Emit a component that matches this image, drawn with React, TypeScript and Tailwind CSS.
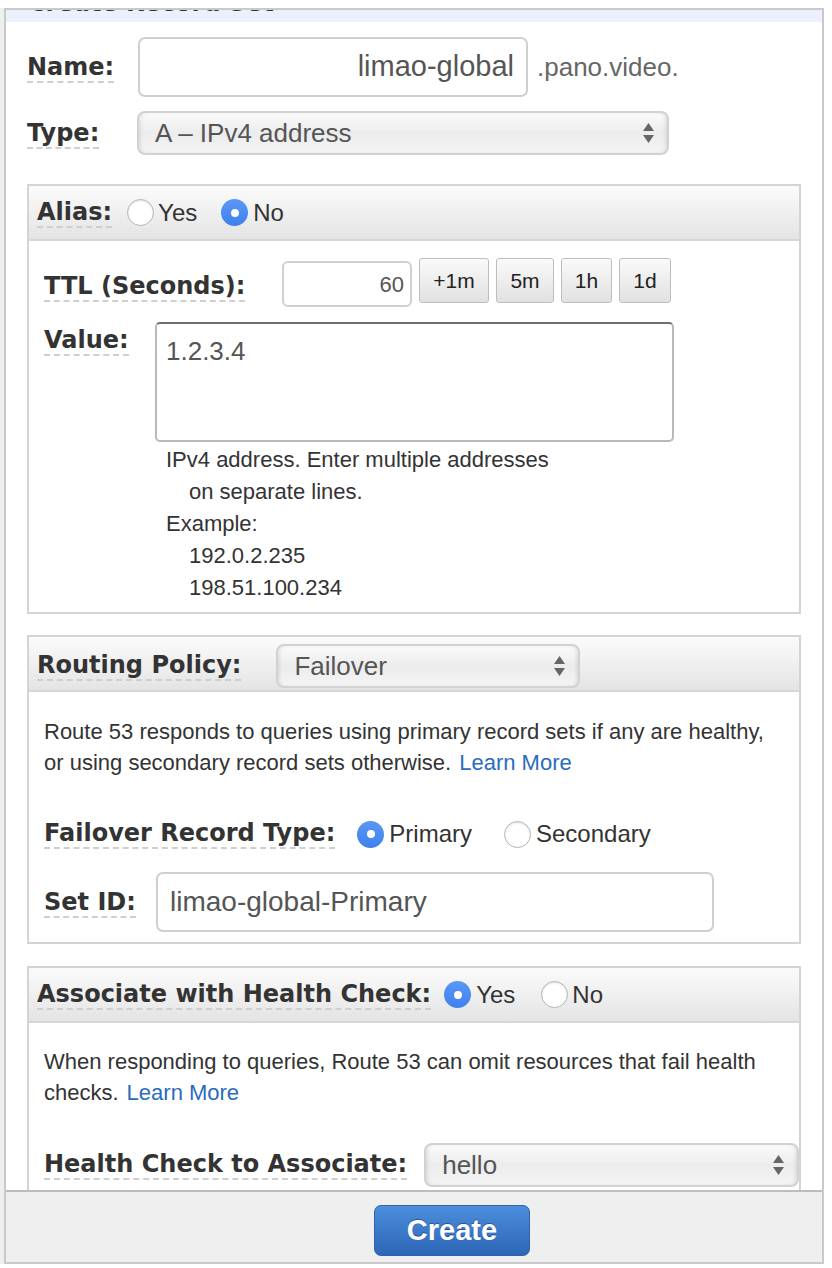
import React from 'react'

const LABEL =
  "font-['DejaVu_Sans',Verdana,sans-serif] font-bold text-[24px] leading-[28px] text-[#333] border-b-2 border-dashed border-[#cfcfcf] whitespace-nowrap"

function Label({ children }: { children: React.ReactNode }) {
  return <span className={LABEL}>{children}</span>
}

function Radio({ checked }: { checked?: boolean }) {
  if (checked) {
    return (
      <span className="flex h-[27px] w-[27px] shrink-0 items-center justify-center rounded-full bg-[linear-gradient(#5a98f5,#3f80ee)]">
        <span className="block h-[8px] w-[8px] rounded-full bg-white" />
      </span>
    )
  }
  return (
    <span className="block h-[27px] w-[27px] shrink-0 rounded-full border border-[#b4b4b4] bg-white shadow-[inset_0_1px_2px_rgba(0,0,0,0.12)]" />
  )
}

function Arrows() {
  return (
    <svg width="13" height="24" viewBox="0 0 13 24" className="shrink-0">
      <path d="M6.5 2 L12 10 H1 Z" fill="#666" />
      <path d="M1 14 H12 L6.5 22 Z" fill="#666" />
    </svg>
  )
}

function Select({ value, className }: { value: string; className: string }) {
  return (
    <div
      className={`flex h-[44px] items-center justify-between rounded-[8px] border-2 border-[#d2d2d2] bg-[linear-gradient(#fbfbfb,#ececec_50%,#f4f4f4)] pl-[16px] pr-[12px] shadow-[inset_3px_0_4px_-2px_rgba(0,0,0,0.12),inset_-3px_0_4px_-2px_rgba(0,0,0,0.12)] ${className}`}
    >
      <span className="text-[26px] leading-none text-[#555]">{value}</span>
      <Arrows />
    </div>
  )
}

function Panel({ header, children }: { header: React.ReactNode; children: React.ReactNode }) {
  return (
    <div className="ml-[21px] w-[774px] border-2 border-[#d4d4d4] bg-white">
      <div className="flex h-[55px] items-center border-b-2 border-[#d6d6d6] bg-[linear-gradient(#fbfbfb,#e4e4e4)] pl-[8px]">
        {header}
      </div>
      {children}
    </div>
  )
}

function TimeButton({ text, w }: { text: string; w: string }) {
  return (
    <span
      className={`flex h-[45px] items-center justify-center rounded-[3px] border border-[#bdbdbd] bg-[linear-gradient(#fafafa,#e1e1e1)] text-[21px] text-[#222] ${w}`}
    >
      {text}
    </span>
  )
}

export default function App() {
  return (
    <div className="relative h-[1268px] w-[832px] overflow-hidden bg-white pt-[8px] font-['Liberation_Sans',Arial,sans-serif] text-[#333]">
      <div className="flex">
        <div className="h-[1256px] w-[4px] bg-[#efefef]" />
        <div className="flex h-[1256px] w-[820px] flex-col border-2 border-[#c9c9c9]">
          {/* title strip, scrolled out of view */}
          <div className="flex h-[12px] shrink-0 items-end overflow-hidden bg-[#eaf1fb] pl-[22px]">
            <span className="mb-[7px] font-['DejaVu_Sans',Verdana,sans-serif] text-[24px] font-bold leading-[24px] text-[#333]">
              Create Record Set
            </span>
          </div>

          {/* scrolling body */}
          <div className="h-[1168px] shrink-0 overflow-hidden">
            <div className="ml-[21px] mt-[15px] flex items-center">
              <div className="w-[111px]">
                <Label>Name:</Label>
              </div>
              <div className="flex h-[60px] w-[390px] items-center justify-end rounded-[7px] border-2 border-[#cfcfcf] pr-[12px] text-[29px] text-[#555]">
                limao-global
              </div>
              <span className="ml-[9px] text-[26px] text-[#666]">.pano.video.</span>
            </div>

            <div className="ml-[21px] mt-[14px] flex items-center">
              <div className="w-[110px]">
                <Label>Type:</Label>
              </div>
              <Select value="A – IPv4 address" className="w-[532px]" />
            </div>

            <div className="mt-[29px]">
              <Panel
                header={
                  <div className="flex items-center">
                    <Label>Alias:</Label>
                    <span className="ml-[15px]">
                      <Radio />
                    </span>
                    <span className="ml-[4px] text-[24px]">Yes</span>
                    <span className="ml-[24px]">
                      <Radio checked />
                    </span>
                    <span className="ml-[5px] text-[24px]">No</span>
                  </div>
                }
              >
                <div className="pb-[8px] pl-[15px] pt-[17px]">
                  <div className="flex items-start">
                    <div className="mt-[14px] w-[238px]">
                      <Label>TTL (Seconds):</Label>
                    </div>
                    <div className="mt-[3px] flex h-[46px] w-[130px] items-center justify-end rounded-[6px] border-2 border-[#d0d0d0] pr-[6px] text-[22px] text-[#555]">
                      60
                    </div>
                    <div className="ml-[7px] flex gap-[7px]">
                      <TimeButton text="+1m" w="w-[70px]" />
                      <TimeButton text="5m" w="w-[58px]" />
                      <TimeButton text="1h" w="w-[51px]" />
                      <TimeButton text="1d" w="w-[52px]" />
                    </div>
                  </div>

                  <div className="mt-[15px] flex items-start">
                    <div className="mt-[4px] w-[111px]">
                      <Label>Value:</Label>
                    </div>
                    <div className="h-[120px] w-[519px] rounded-[5px] border-2 border-[#b9b9b9] border-t-[#6f6f6f] pl-[9px] pt-[12px] text-[26px] leading-[30px] text-[#555]">
                      1.2.3.4
                    </div>
                  </div>

                  <div className="ml-[122px] mt-[2px] text-[22px] leading-[32px] text-[#333]">
                    <div>IPv4 address. Enter multiple addresses</div>
                    <div className="pl-[23px]">on separate lines.</div>
                    <div>Example:</div>
                    <div className="pl-[23px]">192.0.2.235</div>
                    <div className="pl-[23px]">198.51.100.234</div>
                  </div>
                </div>
              </Panel>
            </div>

            <div className="mt-[21px]">
              <Panel
                header={
                  <div className="flex items-center pt-[5px]">
                    <Label>Routing Policy:</Label>
                    <Select value="Failover" className="ml-[35px] w-[304px]" />
                  </div>
                }
              >
                <div className="pb-[10px] pl-[15px] pt-[24px]">
                  <p className="text-[22px] leading-[31px] text-[#333]">
                    Route 53 responds to queries using primary record sets if any are healthy,
                    <br />
                    or using secondary record sets otherwise.
                    <a className="ml-[8px] text-[#2a6cbd]">Learn More</a>
                  </p>

                  <div className="mt-[36px] flex h-[40px] items-center">
                    <Label>Failover Record Type:</Label>
                    <span className="ml-[22px]">
                      <Radio checked />
                    </span>
                    <span className="ml-[5px] text-[24px]">Primary</span>
                    <span className="ml-[32px]">
                      <Radio />
                    </span>
                    <span className="ml-[5px] text-[24px]">Secondary</span>
                  </div>

                  <div className="mt-[18px] flex items-center">
                    <div className="w-[112px]">
                      <Label>Set ID:</Label>
                    </div>
                    <div className="flex h-[60px] w-[558px] items-center rounded-[7px] border-2 border-[#cfcfcf] pl-[12px] text-[28px] text-[#555]">
                      limao-global-Primary
                    </div>
                  </div>
                </div>
              </Panel>
            </div>

            <div className="mt-[22px]">
              <Panel
                header={
                  <div className="flex items-center">
                    <Label>Associate with Health Check:</Label>
                    <span className="ml-[13px]">
                      <Radio checked />
                    </span>
                    <span className="ml-[5px] text-[24px]">Yes</span>
                    <span className="ml-[26px]">
                      <Radio />
                    </span>
                    <span className="ml-[4px] text-[24px]">No</span>
                  </div>
                }
              >
                <div className="pb-[20px] pl-[15px] pt-[23px]">
                  <p className="text-[22px] leading-[31px] text-[#333]">
                    When responding to queries, Route 53 can omit resources that fail health
                    <br />
                    checks.
                    <a className="ml-[8px] text-[#2a6cbd]">Learn More</a>
                  </p>

                  <div className="mt-[35px] flex items-center">
                    <Label>Health Check to Associate:</Label>
                    <Select value="hello" className="ml-[17px] w-[376px]" />
                  </div>
                </div>
              </Panel>
            </div>
          </div>

          {/* footer */}
          <div className="flex-1 border-t-2 border-[#bcbcbc] bg-[#efefef] pl-[368px] pt-[13px]">
            <button className="flex h-[51px] w-[156px] items-center justify-center rounded-[7px] border border-[#2d62ad] bg-[linear-gradient(#4c8edd,#2d66b6)] text-[29px] font-bold text-white [text-shadow:0_-1px_0_rgba(0,0,0,0.35)]">
              Create
            </button>
          </div>
        </div>
      </div>
    </div>
  )
}
